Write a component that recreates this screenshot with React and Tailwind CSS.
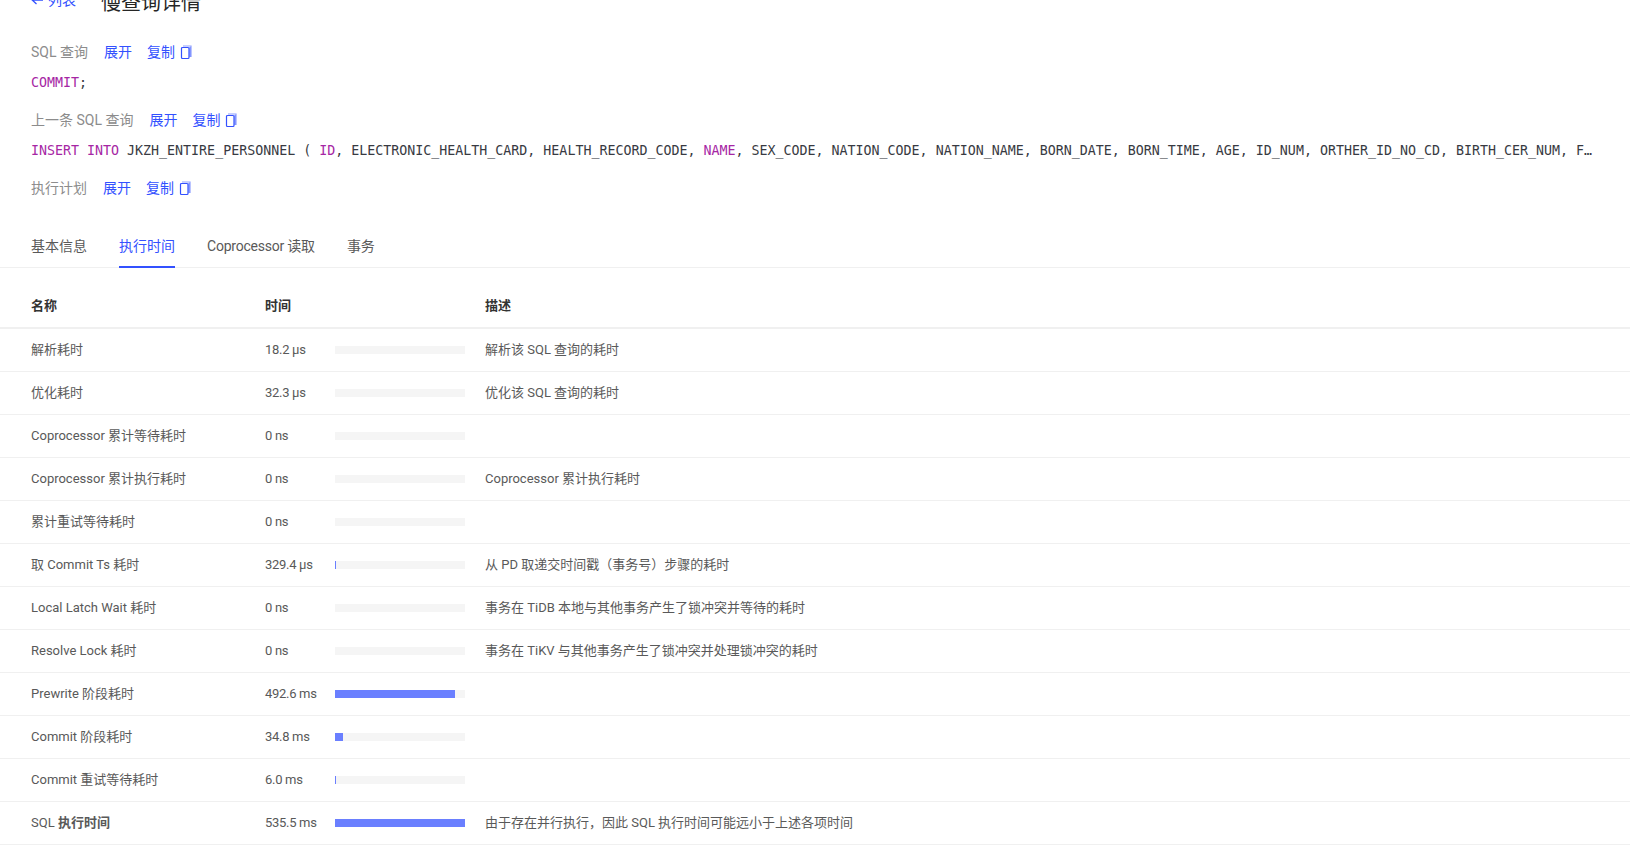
import { useState } from 'react';

const sansFont = 'font-["Segoe_UI",Roboto,"Noto_Sans_CJK_SC",sans-serif]';

const rows = [
  { name: '解析耗时', time: '18.2 μs', pct: 0, desc: '解析该 SQL 查询的耗时' },
  { name: '优化耗时', time: '32.3 μs', pct: 0, desc: '优化该 SQL 查询的耗时' },
  { name: 'Coprocessor 累计等待耗时', time: '0 ns', pct: 0, desc: '' },
  { name: 'Coprocessor 累计执行耗时', time: '0 ns', pct: 0, desc: 'Coprocessor 累计执行耗时' },
  { name: '累计重试等待耗时', time: '0 ns', pct: 0, desc: '' },
  { name: '取 Commit Ts 耗时', time: '329.4 μs', pct: 0.8, desc: '从 PD 取递交时间戳（事务号）步骤的耗时' },
  { name: 'Local Latch Wait 耗时', time: '0 ns', pct: 0, desc: '事务在 TiDB 本地与其他事务产生了锁冲突并等待的耗时' },
  { name: 'Resolve Lock 耗时', time: '0 ns', pct: 0, desc: '事务在 TiKV 与其他事务产生了锁冲突并处理锁冲突的耗时' },
  { name: 'Prewrite 阶段耗时', time: '492.6 ms', pct: 92, desc: '' },
  { name: 'Commit 阶段耗时', time: '34.8 ms', pct: 6.5, desc: '' },
  { name: 'Commit 重试等待耗时', time: '6.0 ms', pct: 1.1, desc: '' },
  { name: <>SQL <span className="font-semibold">执行时间</span></>, time: '535.5 ms', pct: 100, desc: '由于存在并行执行，因此 SQL 执行时间可能远小于上述各项时间' },
];

const tabs = ['基本信息', '执行时间', 'Coprocessor 读取', '事务'];

function CopyIcon() {
  return (
    <svg viewBox="0 0 12 15" className="h-[15px] w-[12px]" fill="none">
      <path d="M3 1h8v11" stroke="#3351ff" strokeOpacity="0.55" strokeWidth="1.2" />
      <rect x="9" y="2" width="2" height="10" fill="#3351ff" fillOpacity="0.4" />
      <rect x="1.5" y="2.5" width="7.5" height="11" rx="1" stroke="#3351ff" strokeWidth="1.2" />
    </svg>
  );
}

function SectionLabel({ label }) {
  return (
    <div className="flex h-[22px] items-center text-[14px]">
      <span className="text-[#8c8c8c]">{label}</span>
      <a className="ml-[16px] text-[#3351ff]">展开</a>
      <a className="ml-[15px] text-[#3351ff]">复制</a>
      <span className="ml-[5px]">
        <CopyIcon />
      </span>
    </div>
  );
}

function Code({ children }) {
  return (
    <div className='truncate font-["DejaVu_Sans_Mono",monospace] text-[13.3px] leading-[20px] text-[#383a42]'>
      {children}
    </div>
  );
}

const Kw = ({ children }) => <span className="text-[#a626a4]">{children}</span>;

export default function App() {
  const [activeTab, setActiveTab] = useState(1);

  return (
    <div className={`h-screen overflow-hidden bg-white text-[13px] text-[#595959] ${sansFont}`}>
      <div className="-mt-[12px] flex h-[30px] items-center pl-[31px]">
        <a className="-mt-[6px] flex w-[70px] items-center gap-[5px] text-[14px] text-[#3351ff]">
          <svg viewBox="0 0 12 10" className="h-[10px] w-[12px]" fill="none" stroke="#3351ff" strokeWidth="1.3">
            <path d="M5.5 1 1.2 5l4.3 4M1.2 5H12" />
          </svg>
          <span>列表</span>
        </a>
        <h1 className="text-[20px] font-normal text-[#262626]">慢查询详情</h1>
      </div>

      <div className="pl-[31px] pr-[35px] pt-[23px]">
        <SectionLabel label="SQL 查询" />
        <div className="mt-[10px]">
          <Code>
            <Kw>COMMIT</Kw>;
          </Code>
        </div>
        <div className="mt-[16px]">
          <SectionLabel label="上一条 SQL 查询" />
        </div>
        <div className="mt-[10px]">
          <Code>
            <Kw>INSERT INTO</Kw> JKZH_ENTIRE_PERSONNEL ( <Kw>ID</Kw>, ELECTRONIC_HEALTH_CARD, HEALTH_RECORD_CODE, <Kw>NAME</Kw>, SEX_CODE, NATION_CODE, NATION_NAME, BORN_DATE, BORN_TIME, AGE, ID_NUM, ORTHER_ID_NO_CD, BIRTH_CER_NUM, FIRST_CONTACT_NAME, FIRST_CONTACT_TEL, ADDRESS_CODE
          </Code>
        </div>
        <div className="mt-[16px]">
          <SectionLabel label="执行计划" />
        </div>
      </div>

      <div className="mt-[28px] flex h-[41px] gap-[32px] border-b border-[#f0f0f0] pl-[31px] text-[14px]">
        {tabs.map((tab, i) => (
          <button
            key={tab}
            onClick={() => setActiveTab(i)}
            className={`-mb-px h-[41px] border-b-2 ${i === 2 ? 'tracking-[-0.22px]' : ''} ${i === activeTab ? 'border-[#3351ff] text-[#3351ff]' : 'border-transparent text-[#595959]'}`}
          >
            {tab}
          </button>
        ))}
      </div>

      <div className="mt-[16px]">
        <div className="grid h-[45px] grid-cols-[265px_220px_1fr] items-center border-b-2 border-[#f0f0f0] font-semibold text-[#333333]">
          <div className="pl-[31px]">名称</div>
          <div>时间</div>
          <div>描述</div>
        </div>
        {rows.map((row) => (
          <div key={row.time + row.desc + row.pct} className="grid h-[43px] grid-cols-[265px_220px_1fr] items-center border-b border-[#f0f0f0]">
            <div className="pl-[31px]">{row.name}</div>
            <div className="flex items-center">
              <div className="w-[70px] tracking-[-0.3px]">{row.time}</div>
              <div className="h-[8px] w-[130px] bg-[#f5f5f5]">
                <div className="h-full bg-[#6a7fff]" style={{ width: `${row.pct}%` }} />
              </div>
            </div>
            <div>{row.desc}</div>
          </div>
        ))}
      </div>
    </div>
  );
}
